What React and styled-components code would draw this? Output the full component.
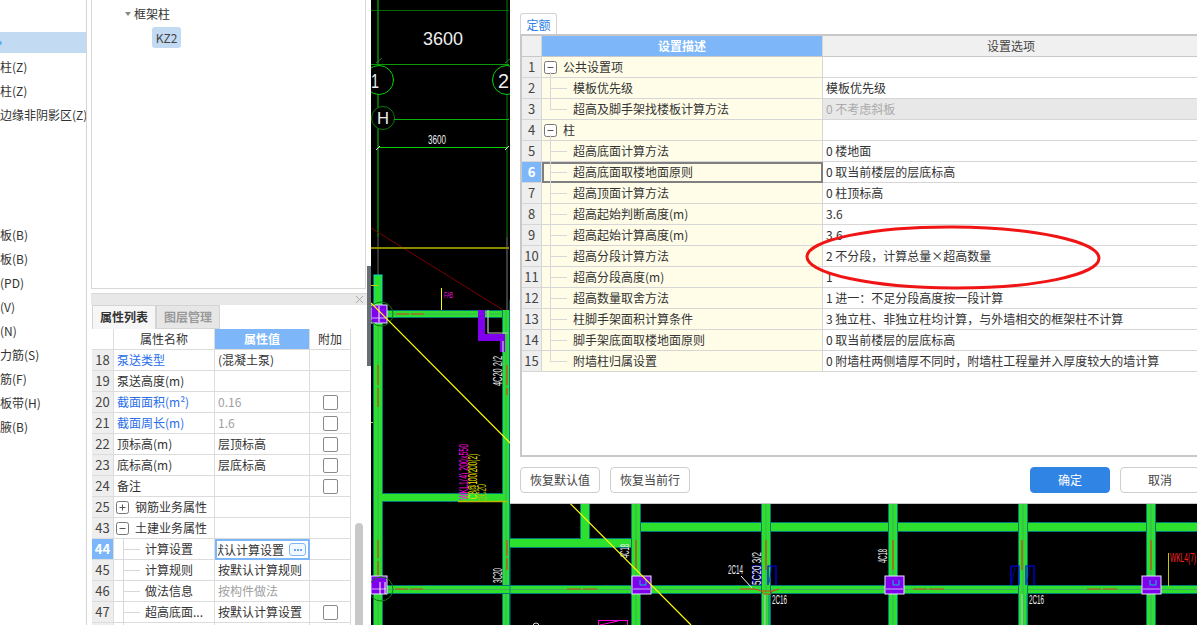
import React from 'react';
import styled, { createGlobalStyle } from 'styled-components';

const Global = createGlobalStyle`
  html, body { margin: 0; padding: 0; background: #fff; }
  body { font-family: "Noto Sans CJK SC", "Noto Sans", sans-serif; font-size: 12px; color: #333; }
`;

const Page = styled.div`
  display: flex; width: 1197px; height: 625px; overflow: hidden; background: #fff;
`;

/* ---------- left list ---------- */
const LeftList = styled.div`
  width: 86px; flex: none; border-right: 1px solid #d6d6d6; padding-top: 32px; box-sizing: content-box;
`;
const ListRow = styled.div`
  height: 21px; margin-bottom: 3px; line-height: 21px; white-space: nowrap; overflow: hidden;
  background: ${p => (p.$selected ? '#c3daf3' : 'transparent')};
  position: relative;
`;
const ListMark = styled.span`
  position: absolute; left: -2px; top: 9px; width: 4px; height: 4px; border-radius: 50%; background: #58b4ee;
`;

/* ---------- middle column ---------- */
const MidColumn = styled.div`
  width: 276px; flex: none; margin-left: 4px; display: flex; flex-direction: column;
`;
const TreePanel = styled.div`
  height: 289px; flex: none; box-sizing: border-box; width: 275px;
  border: 1px solid #d8d8d8; border-top: 0; padding-top: 3px; background: #fff;
`;
const TreeNode = styled.div`
  display: flex; align-items: center; height: 21px; padding-left: 33px; gap: 3px;
`;
const Caret = styled.span`
  width: 0; height: 0; border-left: 3.5px solid transparent; border-right: 3.5px solid transparent; border-top: 4px solid #888;
`;
const Chip = styled.div`
  width: 29px; height: 21px; margin: 3px 0 0 60px; border-radius: 3px; background: #c3daf3;
  text-align: center; line-height: 21px; font-size: 12px; color: #444;
`;
const PropPanel = styled.div`
  margin-top: 4px; flex: 1; min-height: 0; overflow: hidden; display: flex; flex-direction: column;
`;
const TitleStrip = styled.div`
  height: 11px; flex: none; background: #e8e8e8; border-top: 1px solid #d8d8d8;
  display: flex; align-items: center; justify-content: flex-end; padding-right: 3px;
`;
const TabRow = styled.div`
  display: flex; height: 24px; flex: none; background: #fff; padding-left: 1px;
`;
const PropTab = styled.div`
  width: 64px; box-sizing: border-box; text-align: center; line-height: 22px; font-weight: 700;
  background: ${p => (p.$active ? '#f6f6f6' : '#e6e6e6')};
  color: ${p => (p.$active ? '#333' : '#999')};
  border: 1px solid #d4d4d4; border-bottom: ${p => (p.$active ? '0' : '1px solid #d4d4d4')};
`;
const PropBody = styled.div`
  display: flex; flex: 1; min-height: 0; padding-left: 1px;
`;
const PropTable = styled.div`
  width: 259px; flex: none;
`;
const PropRowWrap = styled.div`
  display: grid; grid-template-columns: 22px 101px 95px 41px; height: 21px;
`;
const PropNum = styled.div`
  box-sizing: border-box; border-right: 1px solid #dcdcdc; border-bottom: 1px solid #dcdcdc;
  background: ${p => (p.$blank ? '#fff' : p.$active ? '#7db7f9' : '#eeeeee')};
  color: ${p => (p.$active ? '#fff' : '#444')};
  font-weight: ${p => (p.$active ? 700 : 400)};
  font-size: 13px; line-height: 20px; text-align: center;
`;
const PropCell = styled.div`
  box-sizing: border-box; position: relative; border-right: 1px solid #dcdcdc; border-bottom: 1px solid #dcdcdc;
  line-height: 20px; white-space: nowrap; overflow: hidden; display: flex; align-items: center;
  padding-left: ${p => p.$pad ?? 3}px;
  color: ${p => p.$color || '#333'};
`;
const PropHead = styled.div`
  box-sizing: border-box; border-right: 1px solid #dcdcdc; border-bottom: 1px solid #dcdcdc;
  line-height: 20px; text-align: center;
  background: ${p => (p.$active ? '#7db7f9' : '#fff')};
  color: ${p => (p.$active ? '#fff' : '#333')};
  font-weight: ${p => (p.$active ? 700 : 400)};
`;
const EditCell = styled.div`
  box-sizing: border-box; border: 2px solid #7db7f9; display: flex; align-items: center; height: 21px;
  padding-left: 1px; gap: 5px;
`;
const ClipText = styled.div`
  width: 66px; overflow: hidden; white-space: nowrap; line-height: 17px; text-indent: -6px;
`;
const MoreButton = styled.div`
  width: 15px; height: 11px; border: 1px solid #7db7f9; border-radius: 3px; display: flex;
  align-items: center; justify-content: center; gap: 1px; background: #f2f8ff;
`;
const MoreDot = styled.span`
  width: 2px; height: 2px; background: #3c8cee; border-radius: 50%;
`;
const CheckCell = styled.div`
  box-sizing: border-box; border-right: 1px solid #dcdcdc; border-bottom: 1px solid #dcdcdc;
  display: flex; align-items: center; justify-content: center;
`;
const CheckBox = styled.span`
  width: 13px; height: 13px; border: 1px solid #8a8a8a; border-radius: 2px; background: #fff; box-sizing: content-box;
`;
const ScrollTrack = styled.div`
  width: 16px; flex: none; padding: 194px 0 0 4px; box-sizing: border-box;
`;
const ScrollThumb = styled.div`
  width: 8px; height: 120px; background: #c8c8c8; border-radius: 4px;
`;

const Splitter = styled.div`
  width: 4px; flex: none; padding-top: 266px; box-sizing: border-box;
`;
const SplitThumb = styled.div`
  height: 100px; background: #666e78;
`;

/* ---------- tree guides ---------- */
const Guide = styled.span`
  position: absolute; background: #d8d8d8;
`;
const GuideH = styled(Guide)`
  left: ${p => p.$x}px; top: 10px; width: 17px; height: 1px;
`;
const GuideV = styled(Guide)`
  left: ${p => p.$x}px; top: ${p => p.$top ?? 0}px; width: 1px; height: ${p => p.$h ?? 21}px;
`;
const Toggle = styled.svg`
  width: 13px; height: 13px; flex: none; margin-right: 6px; display: block;
`;
const ToggleIcon = ({ plus }) => (
  <Toggle viewBox="0 0 13 13">
    <rect x="0.5" y="0.5" width="12" height="12" rx="2" fill="#fff" stroke="#777" />
    <path d="M3.5 6.5h6" stroke="#555" />
    {plus && <path d="M6.5 3.5v6" stroke="#555" />}
  </Toggle>
);

/* ---------- CAD canvas ---------- */
const CadArea = styled.div`
  flex: 1; position: relative; background: #000; overflow: hidden;
`;
const CadSvg = styled.svg`
  display: block; width: 826px; height: 625px;
`;
const Dialog = styled.div`
  position: absolute; left: 139px; top: 0; width: 700px; background: #fff;
  border-bottom: 1px solid #c8c8c8;
  display: flex; flex-direction: column; padding: 13px 10px 0 10px; box-sizing: border-box;
  height: 504px;
`;
const DialogTab = styled.div`
  width: 37px; height: 21px; box-sizing: border-box; border: 1px solid #d4d4d4; border-bottom: 0;
  border-radius: 3px 3px 0 0; text-align: center; line-height: 21px; color: #2f7fe8; flex: none;
`;
const TableFrame = styled.div`
  height: 423px; flex: none; box-sizing: border-box; border: solid #c8c8c8; border-width: 2px 0 2px 2px; background: #fff;
`;
const SetRowWrap = styled.div`
  display: grid; grid-template-columns: 20px 281px 1fr; height: 21px;
`;
const SetNum = styled.div`
  box-sizing: border-box; border-right: 1px solid #d6d6d6; border-bottom: 1px solid #d6d6d6;
  background: ${p => (p.$active ? '#7db7f9' : '#eeeeee')};
  color: ${p => (p.$active ? '#fff' : '#444')};
  font-weight: ${p => (p.$active ? 700 : 400)};
  font-size: 13px; line-height: 20px; text-align: center;
`;
const SetHead = styled.div`
  box-sizing: border-box; border-right: 1px solid #d6d6d6; border-bottom: 1px solid #c8c8c8;
  background: ${p => (p.$active ? '#7db7f9' : '#f0f0f0')};
  color: ${p => (p.$active ? '#fff' : '#444')};
  font-weight: ${p => (p.$active ? 700 : 400)};
  text-align: center; line-height: 20px;
`;
const SetDesc = styled.div`
  box-sizing: border-box; position: relative; background: #fffde8; white-space: nowrap;
  display: flex; align-items: center; line-height: 20px;
  padding-left: ${p => p.$pad}px;
  border-right: 1px solid #d6d6d6; border-bottom: 1px solid #d6d6d6;
  ${p => p.$focus && 'outline: 2px solid #808080; outline-offset: -2px;'}
`;
const SetValue = styled.div`
  box-sizing: border-box; border-bottom: 1px solid #d6d6d6; padding-left: 3px; line-height: 20px; white-space: nowrap;
  background: ${p => (p.$disabled ? '#e8e8e8' : '#fff')};
  color: ${p => (p.$disabled ? '#aaa' : '#333')};
`;
const DialogFooter = styled.div`
  display: flex; gap: 10px; padding-top: 10px; flex: none;
`;
const FootButton = styled.div`
  width: 80px; height: 26px; box-sizing: border-box; border-radius: 4px; text-align: center; line-height: 24px;
  border: 1px solid ${p => (p.$primary ? '#2f84e4' : '#cfcfcf')};
  background: ${p => (p.$primary ? '#2f84e4' : '#fff')};
  color: ${p => (p.$primary ? '#fff' : '#444')};
  ${p => p.$push && 'margin-left: auto;'}
`;
const RedEllipse = styled.svg`
  position: absolute; left: 294px; top: 224px; width: 300px; height: 68px; pointer-events: none;
`;

/* ---------- data ---------- */
const leftItems = ['', '柱(Z)', '柱(Z)', '边缘非阴影区(Z)', '', '', '', '', '板(B)', '板(B)', '(PD)', '(V)', '(N)', '力筋(S)', '筋(F)', '板带(H)', '腋(B)'];

const BLUE = '#2a6ee8';
const GRAY = '#a0a0a0';
const propRows = [
  { n: 18, name: '泵送类型', color: BLUE, value: '(混凝土泵)' },
  { n: 19, name: '泵送高度(m)' },
  { n: 20, name: '截面面积(m²)', color: BLUE, value: '0.16', valueColor: GRAY, check: true },
  { n: 21, name: '截面周长(m)', color: BLUE, value: '1.6', valueColor: GRAY, check: true },
  { n: 22, name: '顶标高(m)', value: '层顶标高', check: true },
  { n: 23, name: '底标高(m)', value: '层底标高', check: true },
  { n: 24, name: '备注', check: true },
  { n: 25, name: '钢筋业务属性', group: 'plus' },
  { n: 43, name: '土建业务属性', group: 'minus' },
  { n: 44, name: '计算设置', child: true, active: true, edit: '默认计算设置' },
  { n: 45, name: '计算规则', child: true, value: '按默认计算规则' },
  { n: 46, name: '做法信息', child: true, value: '按构件做法', valueColor: GRAY },
  { n: 47, name: '超高底面...', child: true, value: '按默认计算设置', check: true },
  { n: '', name: '', child: true },
];

const setRows = [
  { name: '公共设置项', group: true, line: 'start' },
  { name: '模板优先级', value: '模板优先级', line: 'mid' },
  { name: '超高及脚手架找楼板计算方法', value: '0 不考虑斜板', disabled: true, line: 'end' },
  { name: '柱', group: true, line: 'start' },
  { name: '超高底面计算方法', value: '0 楼地面', line: 'mid' },
  { name: '超高底面取楼地面原则', value: '0 取当前楼层的层底标高', line: 'mid', focus: true },
  { name: '超高顶面计算方法', value: '0 柱顶标高', line: 'mid' },
  { name: '超高起始判断高度(m)', value: '3.6', line: 'mid' },
  { name: '超高起始计算高度(m)', value: '3.6', line: 'mid' },
  { name: '超高分段计算方法', value: '2 不分段，计算总量×超高数量', line: 'mid' },
  { name: '超高分段高度(m)', value: '1', line: 'mid' },
  { name: '超高数量取舍方法', value: '1 进一：不足分段高度按一段计算', line: 'mid' },
  { name: '柱脚手架面积计算条件', value: '3 独立柱、非独立柱均计算，与外墙相交的框架柱不计算', line: 'mid' },
  { name: '脚手架底面取楼地面原则', value: '0 取当前楼层的层底标高', line: 'mid' },
  { name: '附墙柱归属设置', value: '0 附墙柱两侧墙厚不同时，附墙柱工程量并入厚度较大的墙计算', line: 'end' },
];

/* ---------- CAD drawing, in page coordinates ---------- */
const GREEN = '#2de02d';
const HBeam = ({ x1, x2, y, h = 8 }) => (
  <g>
    <rect x={x1} y={y} width={x2 - x1} height={h} fill={GREEN} />
    <rect x={x1} y={y - 1} width={x2 - x1} height="1" fill="#007878" />
    <rect x={x1} y={y + h} width={x2 - x1} height="1" fill="#007878" />
  </g>
);
const VBeam = ({ x, y1, y2, w = 8, core }) => (
  <g>
    <rect x={x} y={y1} width={w} height={y2 - y1} fill={GREEN} />
    <rect x={x - 1} y={y1} width="1" height={y2 - y1} fill="#007878" />
    <rect x={x + w} y={y1} width="1" height={y2 - y1} fill="#007878" />
    {core && <rect x={x + w / 2 - 0.5} y={y1} width="1" height={y2 - y1} fill="#3fae5e" />}
  </g>
);
const Column = ({ x, y = 576, w = 19, h = 18 }) => (
  <g>
    <rect x={x} y={y} width={w} height={h} fill="#8000ee" stroke="#e8e8ff" />
    <path d={`M${x + 1} ${y + 13}H${x + w - 1}`} stroke="#c8b0ff" />
  </g>
);
const Dash = ({ d }) => <path d={d} stroke="#d84010" strokeWidth="1.2" fill="none" />;
const VText = ({ x, y, len, fill = '#eee', size = 12, children }) => (
  <text transform={`translate(${x} ${y}) rotate(-90)`} fill={fill} fontSize={size} fontFamily="Liberation Sans" textLength={len} lengthAdjust="spacingAndGlyphs">{children}</text>
);
const HText = ({ x, y, len, fill = '#eee', size = 12, children }) => (
  <text x={x} y={y} fill={fill} fontSize={size} fontFamily="Liberation Sans" textLength={len} lengthAdjust="spacingAndGlyphs">{children}</text>
);

const CadDrawing = () => (
  <CadSvg viewBox="371 0 826 625">
    <rect x="371" y="0" width="826" height="625" fill="#000" />
    <path d="M371 10.5H509" stroke="#006a00" />
    <path d="M378 0V237" stroke="#0a8a0a" strokeWidth="1.5" />
    <path d="M378 237V310" stroke="#666" />
    <path d="M507 0V237" stroke="#0a7a0a" />
    <path d="M507 237V310" stroke="#777" />
    <HText x="423" y="45" len="40" size="19">3600</HText>
    <path d="M371 64.5H509" stroke="#0a9a0a" />
    <path d="M376 63l6-5M505 63l6-5" stroke="#2a7a2a" />
    <circle cx="379" cy="80" r="14.5" fill="#000" stroke="#0ad00a" />
    <circle cx="507" cy="80" r="14.5" fill="#000" stroke="#0ad00a" />
    <HText x="371" y="88" len="8" size="20">1</HText>
    <HText x="498" y="88" len="11" size="20">2</HText>
    <circle cx="383" cy="118" r="11.5" fill="#000" stroke="#0a7a0a" />
    <HText x="377" y="124" len="12" size="17">H</HText>
    <path d="M394 119.5H509" stroke="#0ab00a" />
    <HText x="428" y="144" len="18" size="12">3600</HText>
    <path d="M378 147.5H508" stroke="#0ad00a" />
    <path d="M376 150l4-4M505 150l4-4" stroke="#ddd" />
    <path d="M371 228L508 313" stroke="#7a0000" />
    <rect x="371" y="247" width="138" height="2" fill="#888800" />
    <path d="M441.5 288V313" stroke="#ffff00" />
    <HText x="444" y="298" len="9" fill="#ff00e0" size="9">FAB</HText>
    <rect x="374" y="275" width="8" height="35" fill={GREEN} stroke="#00dccc" strokeWidth="1" />
    <path d="M371 285.5H378" stroke="#c8c800" />
    <path d="M371 422.5H378" stroke="#c8c800" />

    {/* frame beams */}
    <rect x="374" y="310" width="135" height="2" fill="#00e8e0" />
    <HBeam x1={374} x2={509} y={311} h={6} />
    <path d="M386 314H509" stroke="#3fae5e" />
    <VBeam x={374} y1={310} y2={625} core />
    <VBeam x={503} y1={310} y2={625} w={6} core />
    <HBeam x1={382} x2={503} y={494} h={7} />
    <HBeam x1={371} x2={1197} y={586} h={7} />
    <path d="M371 589.5H1197" stroke="#3fae5e" />
    <path d="M458 501.5H507" stroke="#b8b800" strokeWidth="1.5" />
    <path d="M510 300V625" stroke="#008888" />
    <Dash d="M396 314h13M411 314h13M378 365v20M378 388v19M378 540v18M378 561v18M507 365v20M507 388v7M507 540v16M507 558v12M395 589h13M410 589h13" />

    {/* purple L and corner columns */}
    <path d="M478 310H485V334H505V352H500V341H478Z" fill="#8000ee" />
    <path d="M488 310V333H508M503 341V352" stroke="#c8c8c8" strokeWidth="1.2" fill="none" />
    <Column x={371} y={305} w={16} h={18} />
    <path d="M379 306V322" stroke="#fff" />
    <circle cx="381" cy="314" r="12" fill="none" stroke="#0a7a0a" />
    <Column x={371} y={576} w={16} h={18} />
    <path d="M380 582V594M385 582V594" stroke="#fff" />
    <circle cx="381" cy="589" r="12" fill="none" stroke="#0a7a0a" />
    <path d="M368 305l4 4-4 4z" fill="#aaa" />

    <VText x={502} y={386} len={30}>4C20 2/2</VText>
    <VText x={502} y={583} len={15}>3C20</VText>
    <VText x={468} y={500} len={56} fill="#ff00e0">WKL1(4) 200x550</VText>
    <VText x={477} y={499} len={45} fill="#e8e800">C8@100/200(2)</VText>
    <VText x={486} y={500} len={16} fill="#b8b800">2C20</VText>

    {/* lower beams */}
    <HBeam x1={641} x2={1197} y={523} h={8} />
    <HBeam x1={510} x2={632} y={539} h={8} />
    <VBeam x={581} y1={503} y2={539} />
    {[632, 762, 889, 1019, 1147].map(x => <VBeam key={x} x={x} y1={503} y2={625} core />)}
    <path d="M765 594V625M1022 594V625" stroke="#ccc" />
    <path d="M769 594V625M1027 594V625" stroke="#008888" />
    <Dash d="M636 570V540M766 570V540M893 570V540M1022 570V540M1151 570V540M567 589h14M583 589h14M740 589h15M913 589h14M929 589h15M1087 589h14M1103 589h14" />
    <path d="M755 589l6 2h12l6-2M761 591l3 3h6l3-3" stroke="#d84010" fill="none" />
    <Column x={632} />
    <Column x={885} />
    <Column x={1142} />
    <path d="M640 580V585H646V580M893 580V585H899V580M1150 580V585H1156V580" stroke="#00c8c8" fill="none" />
    <path d="M753 585V566H761V585M768 585V566H776V585M1011 585V566H1019V585M1026 585V566H1034V585" stroke="#0000ff" strokeWidth="1.2" fill="none" />
    <path d="M754 583l7-17M769 583l3-17M1012 583l3-17M1027 583l3-17" stroke="#0000ff" strokeWidth="0.6" />
    <path d="M741 576L752 588" stroke="#fff" />
    <path d="M1168.5 553V587" stroke="#c8c800" />
    <VText x={629} y={558} len={14}>4C18</VText>
    <VText x={887} y={563} len={14}>4C18</VText>
    <VText x={761} y={585} len={33}>5C20 3/2</VText>
    <HText x={728} y={574} len={15}>2C14</HText>
    <HText x={772} y={604} len={15}>2C16</HText>
    <HText x={1029} y={604} len={15}>2C16</HText>
    <HText x={1170} y={562} len={26} fill="#ff2020">WKL4(7)</HText>
    <rect x="598.5" y="620.5" width="29" height="8" fill="none" stroke="#ff00e0" />
    <path d="M600 625l18-4" stroke="#ff00e0" />
    <circle cx="536" cy="626" r="3" fill="none" stroke="#ddd" />
    {/* diagonal yellow guide */}
    <path d="M371 303L691 625" stroke="#ffff00" strokeWidth="1.2" />
  </CadSvg>
);

const PropRow = ({ r }) => (
  <PropRowWrap>
    <PropNum $active={r.active}>{r.n}</PropNum>
    <PropCell $pad={r.child ? 31 : r.group ? 2 : 3} $color={r.color}>
      {r.child && <><GuideV $x={9} /><GuideH $x={9} /></>}
      {r.group && <ToggleIcon plus={r.group === 'plus'} />}
      {r.name}
    </PropCell>
    {r.edit ? (
      <EditCell>
        <ClipText>{r.edit}</ClipText>
        <MoreButton><MoreDot /><MoreDot /><MoreDot /></MoreButton>
      </EditCell>
    ) : (
      <PropCell $color={r.valueColor}>{r.value}</PropCell>
    )}
    <CheckCell>{r.check && <CheckBox />}</CheckCell>
  </PropRowWrap>
);

const SetRow = ({ r, n }) => (
  <SetRowWrap>
    <SetNum $active={r.focus}>{n}</SetNum>
    <SetDesc $pad={r.group ? 2 : 31} $focus={r.focus}>
      {r.group && <><GuideV $x={8} $top={15} $h={6} /><ToggleIcon /></>}
      {r.line === 'mid' && <><GuideV $x={8} /><GuideH $x={8} /></>}
      {r.line === 'end' && <><GuideV $x={8} $h={11} /><GuideH $x={8} /></>}
      {r.name}
    </SetDesc>
    <SetValue $disabled={r.disabled}>{r.value}</SetValue>
  </SetRowWrap>
);

export default function App() {
  return (
    <Page>
      <Global />
      <LeftList>
        {leftItems.map((t, i) => (
          <ListRow key={i} $selected={i === 0}>{i === 0 && <ListMark />}{t}</ListRow>
        ))}
      </LeftList>
      <MidColumn>
        <TreePanel>
          <TreeNode><Caret />框架柱</TreeNode>
          <Chip>KZ2</Chip>
        </TreePanel>
        <PropPanel>
          <TitleStrip>
            <svg width="9" height="9" viewBox="0 0 9 9"><path d="M1 1l7 7M8 1L1 8" stroke="#aaa" /></svg>
          </TitleStrip>
          <TabRow>
            <PropTab $active>属性列表</PropTab>
            <PropTab>图层管理</PropTab>
          </TabRow>
          <PropBody>
            <PropTable>
              <PropRowWrap>
                <PropNum $blank />
                <PropHead>属性名称</PropHead>
                <PropHead $active>属性值</PropHead>
                <PropHead>附加</PropHead>
              </PropRowWrap>
              {propRows.map((r, i) => <PropRow key={i} r={r} />)}
            </PropTable>
            <ScrollTrack><ScrollThumb /></ScrollTrack>
          </PropBody>
        </PropPanel>
      </MidColumn>
      <Splitter><SplitThumb /></Splitter>
      <CadArea>
        <CadDrawing />
        <Dialog>
          <DialogTab>定额</DialogTab>
          <TableFrame>
            <SetRowWrap>
              <SetHead />
              <SetHead $active>设置描述</SetHead>
              <SetHead>设置选项</SetHead>
            </SetRowWrap>
            {setRows.map((r, i) => <SetRow key={i} r={r} n={i + 1} />)}
          </TableFrame>
          <DialogFooter>
            <FootButton>恢复默认值</FootButton>
            <FootButton>恢复当前行</FootButton>
            <FootButton $primary $push>确定</FootButton>
            <FootButton>取消</FootButton>
          </DialogFooter>
          <RedEllipse viewBox="0 0 300 68">
            <ellipse cx="149" cy="33.5" rx="146" ry="30.5" fill="none" stroke="#f01414" strokeWidth="3" transform="rotate(0.3 149 33.5)" />
          </RedEllipse>
        </Dialog>
      </CadArea>
    </Page>
  );
}
